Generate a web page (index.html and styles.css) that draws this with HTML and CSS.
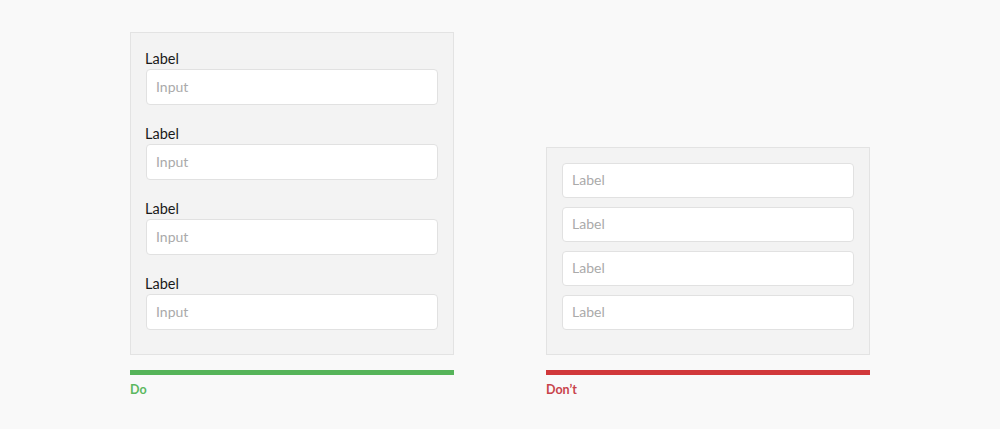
FILE: index.html
```html
<!DOCTYPE html>
<html>
<head>
<meta charset="utf-8">
<link rel="stylesheet" href="styles.css">
</head>
<body>
<div class="stage">
  <div class="example">
    <div class="panel panel-do">
      <div class="field"><div class="label">Label</div><div class="input">Input</div></div>
      <div class="field"><div class="label">Label</div><div class="input">Input</div></div>
      <div class="field"><div class="label">Label</div><div class="input">Input</div></div>
      <div class="field"><div class="label">Label</div><div class="input">Input</div></div>
    </div>
    <div class="bar bar-do"></div>
    <div class="caption caption-do">Do</div>
  </div>
  <div class="example">
    <div class="panel panel-dont">
      <div class="input input-sm">Label</div>
      <div class="input input-sm">Label</div>
      <div class="input input-sm">Label</div>
      <div class="input input-sm">Label</div>
    </div>
    <div class="bar bar-dont"></div>
    <div class="caption caption-dont">Don’t</div>
  </div>
</div>
</body>
</html>
```
FILE: styles.css
```css
html, body {
  margin: 0;
  padding: 0;
  background: #f9f9f9;
  font-family: Lato, "Open Sans", sans-serif;
}
.stage {
  display: flex;
  justify-content: center;
  align-items: flex-end;
  gap: 92px;
  padding-top: 32px;
}
.example {
  width: 324px;
  display: flex;
  flex-direction: column;
}
.panel {
  background: #f3f3f3;
  border: 1px solid #e3e3e3;
  padding: 17px 15px 24px 15px;
  display: flex;
  flex-direction: column;
}
.panel-do { gap: 20px; }
.panel-dont { padding-top: 15px; gap: 9px; }
.field {
  display: flex;
  flex-direction: column;
  gap: 1px;
}
.label {
  font-size: 14.5px;
  line-height: 18px;
  color: #1a1a1a;
  margin-left: -1px;
}
.input {
  height: 36px;
  box-sizing: border-box;
  background: #fff;
  border: 1px solid #e1e1e1;
  border-radius: 4px;
  padding: 0 9px 2px;
  display: flex;
  align-items: center;
  font-size: 14px;
  color: #aaaaaa;
}
.input-sm { height: 35px; padding-bottom: 2px; }
.bar {
  height: 5px;
  margin-top: 15px;
}
.bar-do { background: #56b45a; }
.bar-dont { background: #d1383b; }
.caption {
  margin-top: 7px;
  font-size: 12.5px;
  line-height: 16px;
  font-weight: 700;
}
.caption-do { color: #5cb860; }
.caption-dont { color: #c8434a; }
```
